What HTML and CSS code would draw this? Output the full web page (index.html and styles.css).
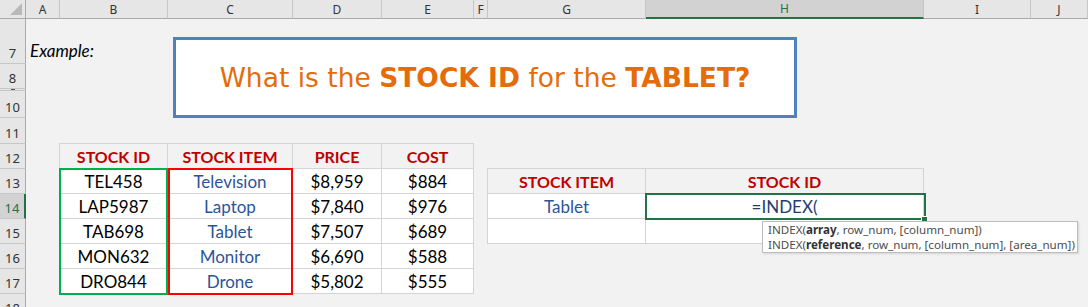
FILE: index.html
```html
<!DOCTYPE html>
<html lang="en">
<head>
  <meta charset="UTF-8" />
  <meta name="viewport" content="width=device-width, initial-scale=1.0" />
  <title>INDEX Lookup Example</title>
  <link rel="stylesheet" href="styles.css">
</head>
<body>
  <div class="sheet">
    <!-- Column headings -->
    <div class="col-heads">
      <div class="corner"><span class="select-all"></span></div>
      <div class="col-head">A</div>
      <div class="col-head">B</div>
      <div class="col-head">C</div>
      <div class="col-head">D</div>
      <div class="col-head">E</div>
      <div class="col-head">F</div>
      <div class="col-head">G</div>
      <div class="col-head active">H</div>
      <div class="col-head">I</div>
      <div class="col-head">J</div>
    </div>

    <!-- Row headings (rows 1-6 hidden, row 9 squeezed) -->
    <div class="row-head">7</div>
    <div class="row-head">8</div>
    <div class="row-head squeezed"><span></span></div>
    <div class="row-head">10</div>
    <div class="row-head">11</div>
    <div class="row-head">12</div>
    <div class="row-head">13</div>
    <div class="row-head active">14</div>
    <div class="row-head">15</div>
    <div class="row-head">16</div>
    <div class="row-head">17</div>
    <div class="row-head">18</div>

    <div class="example">Example:</div>

    <!-- Stock list, column by column -->
    <div class="stock-table">
      <div class="col col-id">
        <div class="cell head">STOCK ID</div>
        <div class="cell">TEL458</div>
        <div class="cell">LAP5987</div>
        <div class="cell">TAB698</div>
        <div class="cell">MON632</div>
        <div class="cell">DRO844</div>
      </div>
      <div class="col col-item">
        <div class="cell head">STOCK ITEM</div>
        <div class="cell blue">Television</div>
        <div class="cell blue">Laptop</div>
        <div class="cell blue">Tablet</div>
        <div class="cell blue">Monitor</div>
        <div class="cell blue">Drone</div>
      </div>
      <div class="col col-price">
        <div class="cell head">PRICE</div>
        <div class="cell">$8,959</div>
        <div class="cell">$7,840</div>
        <div class="cell">$7,507</div>
        <div class="cell">$6,690</div>
        <div class="cell">$5,802</div>
      </div>
      <div class="col col-cost">
        <div class="cell head">COST</div>
        <div class="cell">$884</div>
        <div class="cell">$976</div>
        <div class="cell">$689</div>
        <div class="cell">$588</div>
        <div class="cell">$555</div>
      </div>
      <div class="range range-id"></div>
      <div class="range range-item"></div>
    </div>

    <!-- Lookup block -->
    <div class="lookup">
      <div class="cell head">STOCK ITEM</div>
      <div class="cell head">STOCK ID</div>
      <div class="cell blue">Tablet</div>
      <div class="cell formula">=INDEX(</div>
      <div class="cell"></div>
      <div class="cell"></div>
      <div class="active-cell"></div>
      <div class="fill-handle"></div>
    </div>

    <div class="question-box">
      <p>What is the <b>STOCK ID</b> for the <b>TABLET?</b></p>
    </div>

    <div class="tooltip">
      <div>INDEX(<b>array</b>, row_num, [column_num])</div>
      <div>INDEX(<b>reference</b>, row_num, [column_num], [area_num])</div>
    </div>
  </div>
</body>
</html>
```

FILE: styles.css
```css
/* Reset and base styles */
* {
  margin: 0;
  padding: 0;
  box-sizing: border-box;
}
body {
  background: #f2f2f2;
  font-family: Lato, "Open Sans", sans-serif;
  color: #000;
  overflow: hidden;
}
/* Worksheet grid */
.sheet {
  --cols: 26px 34px 108px 125px 89px 92px 14px 158px 278px 107px 57px;
  position: relative;
  display: grid;
  grid-template-columns: var(--cols);
  grid-template-rows: 19px 45px 25px 2px 27px 26px repeat(7, 25px);
  width: 1088px;
  height: 307px;
  overflow: hidden;
}
/* Column headings */
.col-heads {
  grid-column: 1 / -1;
  grid-row: 1;
  display: grid;
  grid-template-columns: var(--cols);
}
.corner,
.col-head {
  background: #e6e6e6;
  border-right: 1px solid #c6c6c6;
  border-bottom: 1px solid #ababab;
}
.corner {
  display: flex;
  align-items: flex-end;
  justify-content: flex-end;
  padding: 0 3px 3px 0;
  border-right-color: #ababab;
}
.select-all {
  width: 0;
  height: 0;
  border-left: 12px solid transparent;
  border-bottom: 12px solid #b9b9b9;
}
.col-head {
  display: flex;
  align-items: center;
  justify-content: center;
  font-family: "Noto Sans", sans-serif;
  font-size: 12px;
  color: #333;
}
.col-head.active {
  background: #d2d2d2;
  border-bottom: 2px solid #217346;
  color: #217346;
}
/* Row headings */
.row-head {
  grid-column: 1;
  display: flex;
  align-items: flex-end;
  justify-content: center;
  padding-bottom: 3px;
  background: #e6e6e6;
  border-right: 1px solid #ababab;
  border-bottom: 1px solid #c6c6c6;
  font-family: "Noto Sans", sans-serif;
  font-size: 13px;
  line-height: 13px;
  color: #333;
}
.row-head.squeezed {
  align-items: flex-start;
  padding: 0;
}
.row-head.squeezed span {
  width: 4px;
  height: 1px;
  background: #555;
}
.row-head.active {
  background: #d2d2d2;
  border-right: 2px solid #217346;
  color: #217346;
}
/* Label in A7 */
.example {
  grid-column: 2 / 5;
  grid-row: 2;
  align-self: end;
  padding: 0 0 3px 4px;
  font-size: 17px;
  font-style: italic;
}
/* Shared cell look */
.cell {
  height: 25px;
  display: flex;
  align-items: center;
  justify-content: center;
  background: #fff;
  border-right: 1px solid #d4d4d4;
  border-bottom: 1px solid #d4d4d4;
  font-size: 17px;
}
.cell.head {
  background: #f2f2f2;
  color: #c00000;
  font-weight: bold;
  font-size: 16px;
}
.cell.blue {
  color: #2a5599;
}
/* Stock list B12:E17 */
.stock-table {
  grid-column: 3 / 7;
  grid-row: 7 / 13;
  align-self: start;
  justify-self: start;
  position: relative;
  display: flex;
  margin: -1px 0 0 -1px;
  border-top: 1px solid #d4d4d4;
  border-left: 1px solid #d4d4d4;
}
.col-id { width: 108px; }
.col-item { width: 125px; }
.col-price { width: 89px; }
.col-cost { width: 92px; }
/* Coloured range outlines */
.range {
  position: absolute;
  top: 24px;
  height: 127px;
  border: 2px solid;
}
.range-id {
  left: -1px;
  width: 109px;
  border-color: #00b050;
}
.range-item {
  left: 108px;
  width: 125px;
  border-color: #ff0000;
}
/* Lookup block G13:H15 */
.lookup {
  grid-column: 8 / 10;
  grid-row: 8 / 11;
  align-self: start;
  justify-self: start;
  position: relative;
  display: grid;
  grid-template-columns: 158px 278px;
  margin: -1px 0 0 -1px;
  border-top: 1px solid #d4d4d4;
  border-left: 1px solid #d4d4d4;
}
.cell.formula {
  color: #1f3d6e;
}
.active-cell {
  position: absolute;
  left: 157px;
  top: 24px;
  width: 281px;
  height: 27px;
  border: 2px solid #217346;
}
.fill-handle {
  position: absolute;
  left: 433px;
  top: 47px;
  width: 7px;
  height: 7px;
  background: #217346;
  border: 1px solid #fff;
}
/* Floating shape with the question */
.question-box {
  position: absolute;
  left: 173px;
  top: 37px;
  width: 624px;
  height: 81px;
  display: flex;
  align-items: center;
  justify-content: center;
  background: #fff;
  border: 3px solid #4f81bd;
}
.question-box p {
  font-family: "DejaVu Sans", sans-serif;
  font-size: 26.5px;
  color: #e46c0a;
}
/* Function argument tip */
.tooltip {
  position: absolute;
  left: 762px;
  top: 221px;
  width: 316px;
  height: 32px;
  padding: 0 0 0 5px;
  background: #fff;
  border: 1px solid #bdbdbd;
  box-shadow: 1px 1px 2px rgba(0, 0, 0, 0.12);
  font-family: "Noto Sans", sans-serif;
  font-size: 11.6px;
  line-height: 15px;
  color: #4d4d4d;
}
.tooltip b {
  color: #333;
}
```
